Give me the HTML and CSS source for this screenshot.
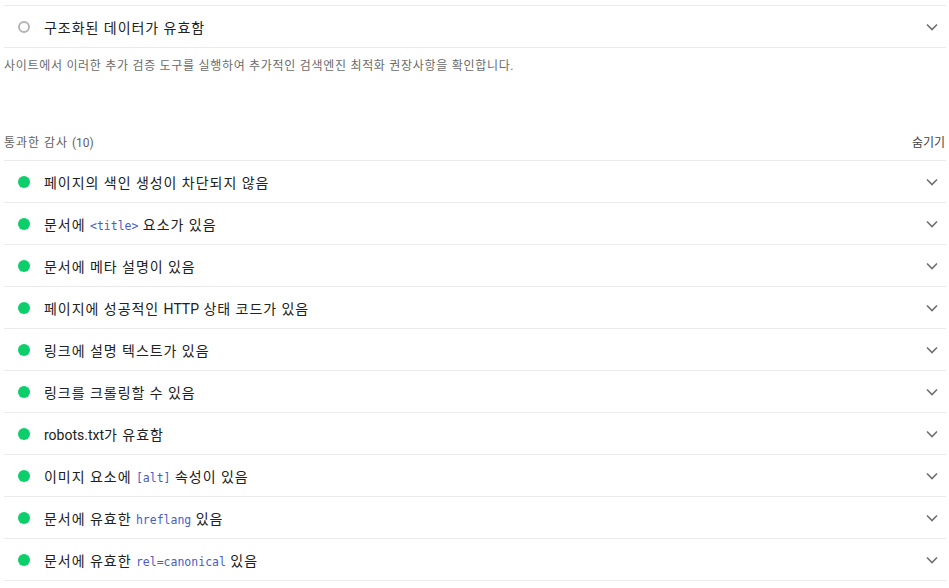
FILE: index.html
```html
<!DOCTYPE html>
<html lang="ko">
<head>
<meta charset="utf-8">
<link rel="stylesheet" href="styles.css">
</head>
<body>
<div class="page">
  <div class="audit-list">
    <div class="audit">
      <span class="dot dot-na"></span>
      <span class="title">구조화된 데이터가 유효함</span>
      <svg class="chev" viewBox="0 0 12 8" width="12" height="8"><path d="M1 1.5 L6 6.5 L11 1.5" fill="none" stroke="#707070" stroke-width="1.6"/></svg>
    </div>
  </div>
  <p class="desc">사이트에서 이러한 추가 검증 도구를 실행하여 추가적인 검색엔진 최적화 권장사항을 확인합니다.</p>

  <div class="group-head">
    <span class="group-title">통과한 감사 <span class="lat">(10)</span></span>
    <span class="group-toggle">숨기기</span>
  </div>
  <div class="audit-list">
    <div class="audit"><span class="dot"></span><span class="title">페이지의 색인 생성이 차단되지 않음</span><svg class="chev" viewBox="0 0 12 8" width="12" height="8"><path d="M1 1.5 L6 6.5 L11 1.5" fill="none" stroke="#707070" stroke-width="1.6"/></svg></div>
    <div class="audit"><span class="dot"></span><span class="title">문서에 <code>&lt;title&gt;</code> 요소가 있음</span><svg class="chev" viewBox="0 0 12 8" width="12" height="8"><path d="M1 1.5 L6 6.5 L11 1.5" fill="none" stroke="#707070" stroke-width="1.6"/></svg></div>
    <div class="audit"><span class="dot"></span><span class="title">문서에 메타 설명이 있음</span><svg class="chev" viewBox="0 0 12 8" width="12" height="8"><path d="M1 1.5 L6 6.5 L11 1.5" fill="none" stroke="#707070" stroke-width="1.6"/></svg></div>
    <div class="audit"><span class="dot"></span><span class="title">페이지에 성공적인 <span class="lat">HTTP</span> 상태 코드가 있음</span><svg class="chev" viewBox="0 0 12 8" width="12" height="8"><path d="M1 1.5 L6 6.5 L11 1.5" fill="none" stroke="#707070" stroke-width="1.6"/></svg></div>
    <div class="audit"><span class="dot"></span><span class="title">링크에 설명 텍스트가 있음</span><svg class="chev" viewBox="0 0 12 8" width="12" height="8"><path d="M1 1.5 L6 6.5 L11 1.5" fill="none" stroke="#707070" stroke-width="1.6"/></svg></div>
    <div class="audit"><span class="dot"></span><span class="title">링크를 크롤링할 수 있음</span><svg class="chev" viewBox="0 0 12 8" width="12" height="8"><path d="M1 1.5 L6 6.5 L11 1.5" fill="none" stroke="#707070" stroke-width="1.6"/></svg></div>
    <div class="audit"><span class="dot"></span><span class="title"><span class="lat">robots.txt</span>가 유효함</span><svg class="chev" viewBox="0 0 12 8" width="12" height="8"><path d="M1 1.5 L6 6.5 L11 1.5" fill="none" stroke="#707070" stroke-width="1.6"/></svg></div>
    <div class="audit"><span class="dot"></span><span class="title">이미지 요소에 <code>[alt]</code> 속성이 있음</span><svg class="chev" viewBox="0 0 12 8" width="12" height="8"><path d="M1 1.5 L6 6.5 L11 1.5" fill="none" stroke="#707070" stroke-width="1.6"/></svg></div>
    <div class="audit"><span class="dot"></span><span class="title">문서에 유효한 <code>hreflang</code> 있음</span><svg class="chev" viewBox="0 0 12 8" width="12" height="8"><path d="M1 1.5 L6 6.5 L11 1.5" fill="none" stroke="#707070" stroke-width="1.6"/></svg></div>
    <div class="audit"><span class="dot"></span><span class="title">문서에 유효한 <code>rel=canonical</code> 있음</span><svg class="chev" viewBox="0 0 12 8" width="12" height="8"><path d="M1 1.5 L6 6.5 L11 1.5" fill="none" stroke="#707070" stroke-width="1.6"/></svg></div>
  </div>
</div>
</body>
</html>
```
FILE: styles.css
```css
html, body {
  margin: 0;
  padding: 0;
  background: #ffffff;
}
body {
  font-family: Roboto, "Noto Sans CJK KR", "Noto Sans", sans-serif;
  color: #212121;
  letter-spacing: 0.06em;
}
.lat {
  letter-spacing: 0;
}
.page {
  padding: 5px 3px 0 4px;
}
.audit-list {
  border-top: 1px solid #ebebeb;
}
.audit {
  height: 41px;
  border-bottom: 1px solid #ebebeb;
  display: flex;
  align-items: center;
  padding: 0 0 0 14px;
}
.dot {
  width: 12px;
  height: 12px;
  border-radius: 50%;
  background: #0cce6b;
  flex: none;
  box-sizing: border-box;
}
.dot-na {
  background: transparent;
  border: 2px solid #b4b4b4;
}
.title {
  margin-left: 14px;
  font-size: 14px;
  flex: 1;
  color: #212121;
}
code {
  font-family: "DejaVu Sans Mono", "Liberation Mono", monospace;
  font-size: 11.5px;
  letter-spacing: 0;
  color: #4a5cc4;
}
.chev {
  flex: none;
  margin-right: 8px;
}
.desc {
  margin: 0;
  height: 36px;
  line-height: 36px;
  font-size: 12px;
  letter-spacing: 0.7px;
  color: #6b6b6b;
}
.group-head {
  display: flex;
  justify-content: space-between;
  align-items: center;
  margin-top: 39px;
  height: 37px;
  font-size: 12px;
  color: #616161;
}
.group-toggle {
  color: #424242;
  letter-spacing: 0;
  margin-right: 1px;
}
```
